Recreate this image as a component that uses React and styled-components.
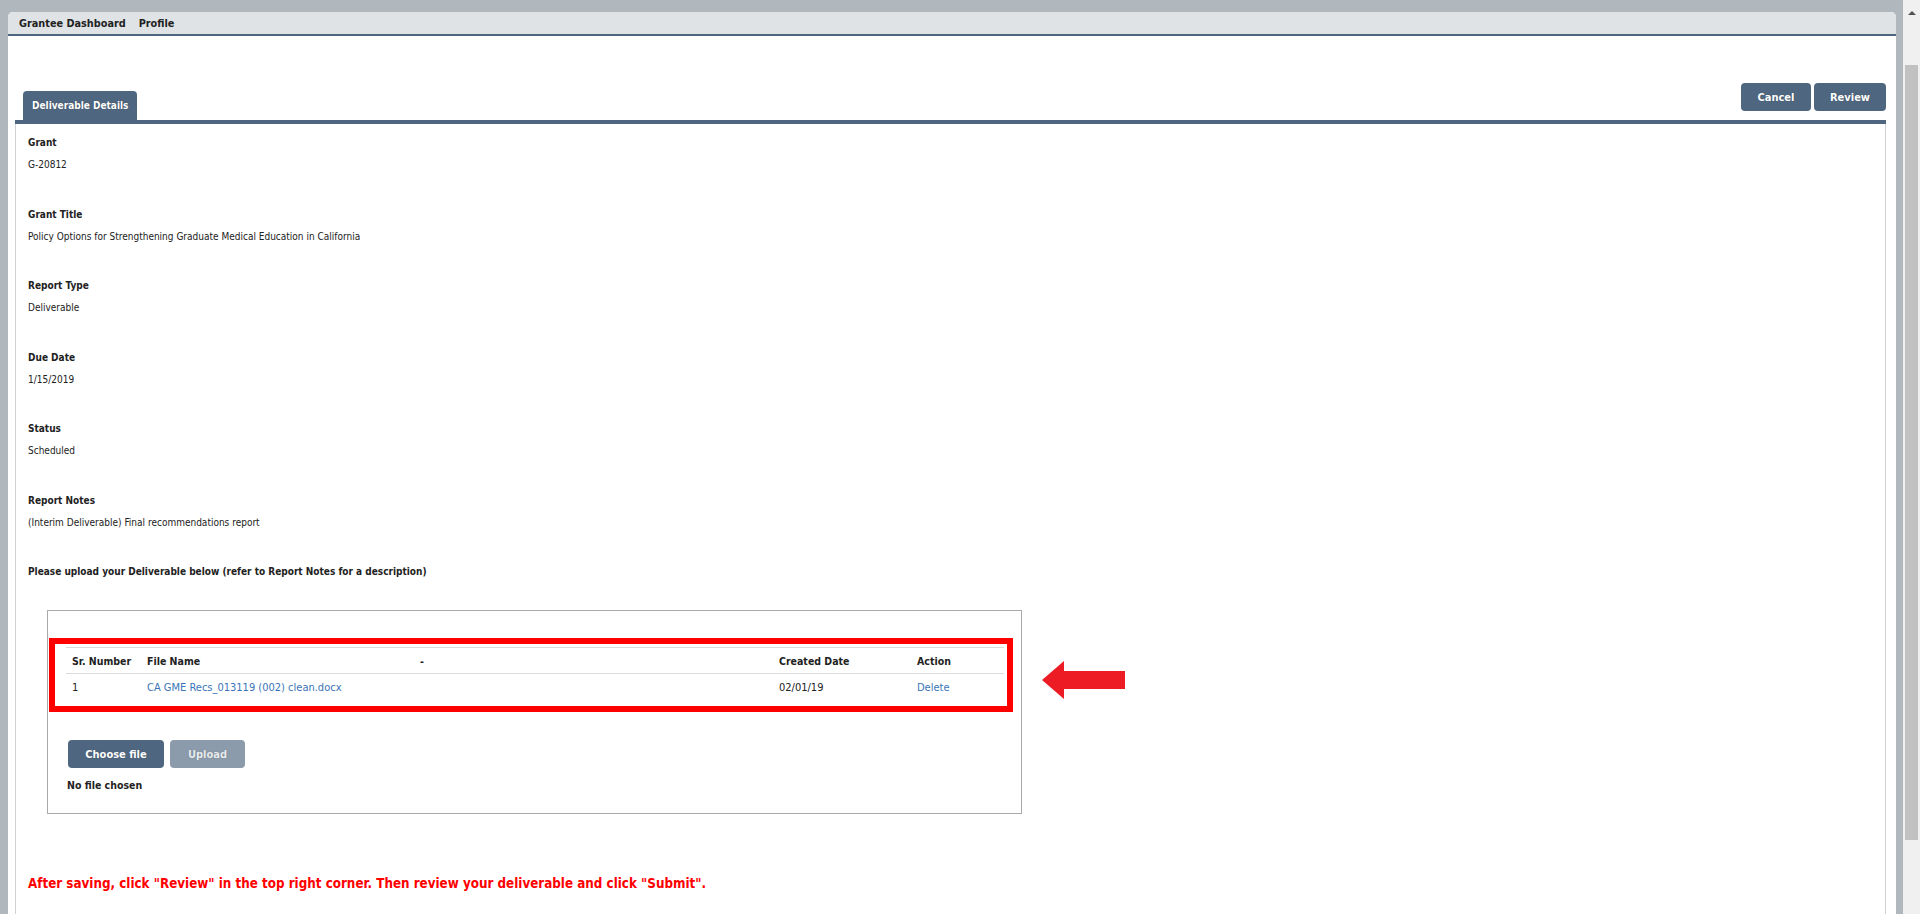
import React from "react";
import styled, { createGlobalStyle } from "styled-components";

const Global = createGlobalStyle`
  html, body { margin: 0; padding: 0; height: 100%; overflow: hidden; }
  body {
    font-family: "DejaVu Sans Condensed", "DejaVu Sans", Verdana, sans-serif;
    font-stretch: condensed;
    color: #222;
    background: #b0b7bd;
  }
`;

const Screen = styled.div`
  display: flex;
  height: 914px;
  overflow: hidden;
  background: #b0b7bd;
`;

const Window = styled.div`
  flex: 1;
  margin: 12px 7px 0 8px;
  background: #fff;
  border-radius: 5px 5px 0 0;
  display: flex;
  flex-direction: column;
  overflow: hidden;
`;

const NavBar = styled.nav`
  height: 22px;
  background: #dfe3e6;
  border-bottom: 2px solid #4f6680;
  border-radius: 5px 5px 0 0;
  display: flex;
  align-items: center;
  gap: 13px;
  padding-left: 11px;
`;

const NavLink = styled.a`
  font-size: 10.8px;
  font-weight: bold;
  color: #222;
  text-decoration: none;
`;

const Body = styled.div`
  flex: 1;
  padding: 0 10px 0 7px;
  display: flex;
  flex-direction: column;
`;

const HeaderRow = styled.div`
  margin-top: 47px;
  display: flex;
  align-items: flex-start;
  justify-content: space-between;
  border-bottom: 4px solid #4f6680;
  height: 37px;
`;

const Tab = styled.div`
  margin: 8px 0 0 8px;
  height: 29px;
  padding: 0 9px;
  background: #4f6680;
  border-radius: 4px 4px 0 0;
  display: flex;
  align-items: center;
  color: #fff;
  font-size: 10px;
  font-weight: bold;
  text-shadow: 0 0 1px rgba(0, 0, 0, 0.4);
  align-self: flex-end;
`;

const Actions = styled.div`
  display: flex;
  gap: 3px;
`;

const Button = styled.button`
  font-family: inherit;
  font-stretch: condensed;
  height: 28px;
  width: ${(p) => p.$w}px;
  border: none;
  border-radius: 4px;
  background: ${(p) => (p.$disabled ? "#8c9bab" : "#4f6680")};
  color: ${(p) => (p.$disabled ? "#e8ecef" : "#fff")};
  font-size: 11px;
  font-weight: bold;
  text-shadow: 0 0 1px rgba(0, 0, 0, 0.3);
  padding: 0;
  cursor: pointer;
`;

const Panel = styled.div`
  flex: 1;
  border-left: 1px solid #cfd2d4;
  border-right: 1px solid #cfd2d4;
  padding: 12px 12px 0 12px;
`;

const Field = styled.div`
  margin-bottom: 35.5px;
`;

const Label = styled.div`
  font-size: 10px;
  font-weight: bold;
  line-height: 14px;
  margin-bottom: 8px;
`;

const Value = styled.div`
  font-size: 10px;
  line-height: 14px;
`;

const Instruction = styled.div`
  font-size: 10px;
  font-weight: bold;
  line-height: 14px;
`;

const UploadRow = styled.div`
  display: flex;
  align-items: flex-start;
  margin: 31px 0 0 19px;
`;

const UploadBox = styled.div`
  width: 975px;
  height: 204px;
  box-sizing: border-box;
  border: 1px solid #aaaaaa;
  padding: 27px 8px 0 1px;
`;

const Highlight = styled.div`
  border: 6px solid #ff0000;
  padding: 3px 3px 5px 11px;
`;

const Table = styled.table`
  width: 100%;
  border-collapse: collapse;
  border-top: 1px solid #dcdcdc;
  table-layout: fixed;
`;

const Th = styled.th`
  text-align: left;
  font-size: 10.5px;
  font-weight: bold;
  height: 25px;
  padding: 0 0 0 6px;
  border-bottom: 1px solid #dcdcdc;
  width: ${(p) => (p.$w ? `${p.$w}px` : "auto")};
`;

const Td = styled.td`
  font-size: 11px;
  height: 27px;
  padding: 0 0 0 6px;
`;

const FileLink = styled.a`
  color: #3a74b8;
  text-decoration: none;
`;

const FileControls = styled.div`
  padding: 28px 0 0 19px;
  display: flex;
  gap: 6px;
`;

const NoFile = styled.div`
  margin: 11px 0 0 18px;
  font-size: 10.5px;
  font-weight: bold;
`;

const Arrow = styled.svg`
  margin: 51px 0 0 20px;
  flex: none;
`;

const Notice = styled.div`
  margin-top: 62px;
  color: #ff0000;
  font-size: 13.3px;
  font-weight: bold;
`;

const ScrollTrack = styled.div`
  width: 17px;
  background: #f0f0f0;
  display: flex;
  flex-direction: column;
  align-items: center;
`;

const ScrollArrow = styled.div`
  margin-top: 11px;
  width: 0;
  height: 0;
  border-left: 4px solid transparent;
  border-right: 4px solid transparent;
  border-bottom: 4px solid #505050;
`;

const Thumb = styled.div`
  margin-top: 50px;
  width: 13px;
  height: 775px;
  background: #c1c1c1;
`;

const fields = [
  ["Grant", "G-20812"],
  ["Grant Title", "Policy Options for Strengthening Graduate Medical Education in California"],
  ["Report Type", "Deliverable"],
  ["Due Date", "1/15/2019"],
  ["Status", "Scheduled"],
  ["Report Notes", "(Interim Deliverable) Final recommendations report"],
];

export default function App() {
  return (
    <>
      <Global />
      <Screen>
        <Window>
          <NavBar>
            <NavLink href="#">Grantee Dashboard</NavLink>
            <NavLink href="#">Profile</NavLink>
          </NavBar>
          <Body>
            <HeaderRow>
              <Tab>Deliverable Details</Tab>
              <Actions>
                <Button $w={70}>Cancel</Button>
                <Button $w={72}>Review</Button>
              </Actions>
            </HeaderRow>
            <Panel>
              {fields.map(([l, v]) => (
                <Field key={l}>
                  <Label>{l}</Label>
                  <Value>{v}</Value>
                </Field>
              ))}
              <Instruction>
                Please upload your Deliverable below (refer to Report Notes for a description)
              </Instruction>
              <UploadRow>
                <UploadBox>
                  <Highlight>
                    <Table>
                      <thead>
                        <tr>
                          <Th $w={69}>Sr. Number</Th>
                          <Th $w={267}>File Name</Th>
                          <Th $w={353}>-</Th>
                          <Th $w={132}>Created Date</Th>
                          <Th>Action</Th>
                        </tr>
                      </thead>
                      <tbody>
                        <tr>
                          <Td>1</Td>
                          <Td>
                            <FileLink href="#">CA GME Recs_013119 (002) clean.docx</FileLink>
                          </Td>
                          <Td></Td>
                          <Td>02/01/19</Td>
                          <Td>
                            <FileLink href="#">Delete</FileLink>
                          </Td>
                        </tr>
                      </tbody>
                    </Table>
                  </Highlight>
                  <FileControls>
                    <Button $w={96}>Choose file</Button>
                    <Button $w={75} $disabled>Upload</Button>
                  </FileControls>
                  <NoFile>No file chosen</NoFile>
                </UploadBox>
                <Arrow width="83" height="38" viewBox="0 0 83 38">
                  <polygon points="0,19 22,0 22,10 83,10 83,28 22,28 22,38" fill="#ed1c24" />
                </Arrow>
              </UploadRow>
              <Notice>
                After saving, click "Review" in the top right corner. Then review your deliverable and click "Submit".
              </Notice>
            </Panel>
          </Body>
        </Window>
        <ScrollTrack>
          <ScrollArrow />
          <Thumb />
        </ScrollTrack>
      </Screen>
    </>
  );
}
